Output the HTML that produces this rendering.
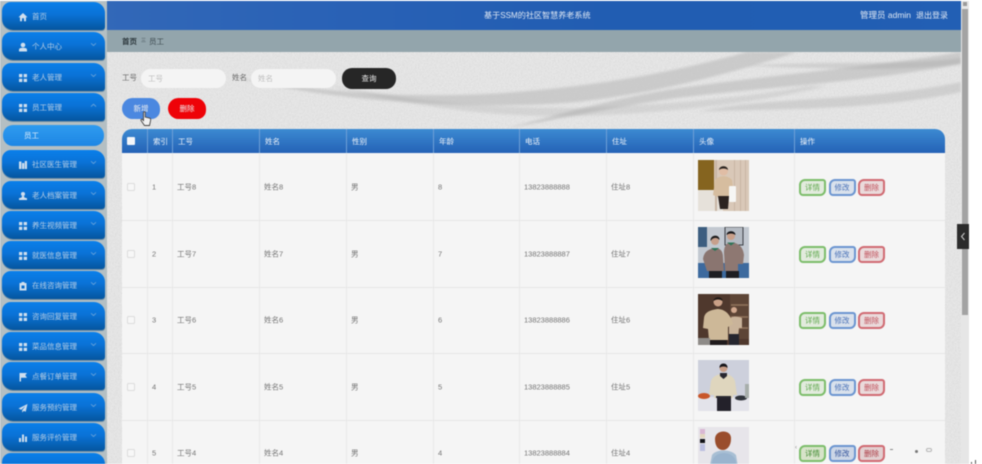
<!DOCTYPE html>
<html lang="zh">
<head>
<meta charset="utf-8">
<title>基于SSM的社区智慧养老系统</title>
<style>
html,body{margin:0;padding:0;width:982px;height:464px;overflow:hidden;background:#fff}
*{box-sizing:border-box}
body{font-family:"Liberation Sans","Noto Sans CJK SC",sans-serif;font-size:7.5px;color:#666}
#root{position:absolute;left:0;top:0;width:982px;height:464px;overflow:hidden;filter:blur(.55px)}
.a{position:absolute}
#side{left:0;top:0;width:107px;height:464px;background:#b4bfc3}
.m{position:absolute;left:2px;width:103px;height:28px;border-radius:9px 11px 3px 11px;background:linear-gradient(#0a7fea 0%,#0a72d6 45%,#05569f 100%);color:#b5cde4;box-shadow:0 1px 0 #6f8ea5}
.m b{position:absolute;left:30px;top:10px;font-weight:400;font-size:7.5px;line-height:10px;white-space:nowrap}
.m svg.i{position:absolute;left:15.500px;top:10px;width:10px;height:10px;fill:#d0dfee}
.m svg.c{position:absolute;left:88px;top:10px;width:7px;height:5px;fill:none;stroke:#6fa6da;stroke-width:1}
#sub{position:absolute;left:3px;top:125px;width:101px;height:21px;border-radius:10px;background:linear-gradient(#2f9bf0,#1d86e4);color:#dcecfa;font-size:7.5px;line-height:22px;padding-left:21px}
#head{left:107px;top:1px;width:854px;height:29px;background:linear-gradient(90deg,#3268b8,#2a62b6 25%,#215db2 60%,#225fb4);color:#dfe8f4}
#bc{left:107px;top:30px;width:854px;height:22px;background:#93a5ac;font-size:7.5px;line-height:23px;color:#3e4c52}
#bg{left:107px;top:52px;width:854px;height:412px;background:#dfdfdf}
.inp{position:absolute;top:69px;height:19px;background:#f4f4f4;border-radius:10px;color:#bdbdbd;font-size:7.5px;line-height:19px;padding-left:7px}
.lb{position:absolute;top:73px;font-size:7.5px;line-height:10px;color:#666}
.btn{position:absolute;text-align:center;font-size:7.5px;color:#eee}
#tb{left:122px;top:129px;width:823px;height:335px;background:#f5f5f5;overflow:hidden;border-radius:10px 10px 0 0}
#th{position:absolute;left:0;top:0;width:823px;height:24px;background:linear-gradient(#3c8ad2,#2462b6)}
.hc{position:absolute;top:0;height:24px;color:#f0f4fa;font-size:7.5px;line-height:25px;border-left:1px solid #6e9fd6;padding-left:5px;white-space:nowrap}
.hl{position:absolute;left:0;width:823px;height:1px;background:#e6e6e6}
.vl{position:absolute;top:24px;width:1px;height:311px;background:#e9e9e9}
.t{position:absolute;line-height:10px;font-size:7.5px;color:#747474;white-space:nowrap;transform:translateY(.7px)}
.ck{position:absolute;left:5px;width:8px;height:8px;border:1px solid #dcdcdc;border-radius:1.500px;background:#f7f7f7}
.pb{position:absolute;width:27px;height:17px;border-radius:6px 3px 6px 4px;border:2px solid;font-size:7.5px;line-height:13px;text-align:center}
.g{left:677px;border-color:#7cbd6a;background:#e2ebdd;color:#5ea84c}
.bl{left:706.500px;border-color:#6b95d0;background:#d9e1ec;color:#4a72b8}
.r{left:736px;border-color:#d06a72;background:#eadadb;color:#c0525c}
.ph{position:absolute;left:576px;width:51px;height:51px;display:block}
</style>
</head>
<body>
<div id="root">

<div class="a" id="bg">
<svg width="854" height="412" style="display:block">
<defs>
<filter id="nz" x="0" y="0" width="100%" height="100%"><feTurbulence type="fractalNoise" baseFrequency=".7" numOctaves="2" seed="4"/><feColorMatrix values="0 0 0 0 .5  0 0 0 0 .5  0 0 0 0 .5  0 0 0 .55 -.17"/></filter>
<filter id="sb"><feGaussianBlur stdDeviation="1.2"/></filter>
</defs>
<rect width="854" height="412" fill="#e8e8e8"/>
<g filter="url(#sb)" fill="#8f8f8f">
<path d="M130 26C220 40 290 46 380 42C480 36 560 22 640 0L690 0C610 26 540 42 470 50C380 58 240 52 130 26Z" opacity=".32"/>
<path d="M400 76C440 66 490 50 560 38C650 24 760 16 854 0L854 12C760 30 650 36 570 46C500 56 450 68 400 76Z" opacity=".32"/>
<path d="M210 30C300 50 380 56 470 56C540 54 640 46 700 34L720 34C640 54 540 62 470 64C380 66 290 52 210 30Z" opacity=".2"/>
<path d="M590 60C660 44 760 50 854 30L854 40C760 60 660 56 590 60Z" opacity=".26"/>
<path d="M640 14C720 8 800 14 854 6L854 12C790 20 710 16 640 14Z" opacity=".26"/>
</g>
<rect width="854" height="412" filter="url(#nz)"/>
</svg>
</div>

<div class="a" id="side">
<div class="m" style="top:2px"><svg class="i" viewBox="0 0 10 10"><path d="M5 1 .5 5.200H2V9.200H4V6.300H6V9.200H8V5.200H9.500Z"/></svg><b>首页</b></div>
<div class="m" style="top:32px"><svg class="i" viewBox="0 0 10 10"><circle cx="5" cy="3" r="2.300"/><path d="M1 9.500V7.600C1 6.300 3 5.800 5 5.800S9 6.300 9 7.600V9.500Z"/></svg><b>个人中心</b><svg class="c" viewBox="0 0 8 6"><path d="M1 1.500 4 4.300 7 1.500"/></svg></div>
<div class="m" style="top:62.500px"><svg class="i" viewBox="0 0 10 10"><path d="M1 1H4.300V4.300H1ZM5.700 1H9V4.300H5.700ZM1 5.700H4.300V9H1ZM5.700 5.700H9V9H5.700Z"/></svg><b>老人管理</b><svg class="c" viewBox="0 0 8 6"><path d="M1 1.500 4 4.300 7 1.500"/></svg></div>
<div class="m" style="top:93px"><svg class="i" viewBox="0 0 10 10"><path d="M1 1H4.300V4.300H1ZM5.700 1H9V4.300H5.700ZM1 5.700H4.300V9H1ZM5.700 5.700H9V9H5.700Z"/></svg><b>员工管理</b><svg class="c" viewBox="0 0 8 6"><path d="M1 4.300 4 1.500 7 4.300"/></svg></div>
<div id="sub">员工</div>
<div class="m" style="top:150px"><svg class="i" viewBox="0 0 10 10"><path d="M1 1.500H3.400V9H1ZM4 3H6.300V9H4ZM6.800 1H9V9H6.800Z"/></svg><b>社区医生管理</b><svg class="c" viewBox="0 0 8 6"><path d="M1 1.500 4 4.300 7 1.500"/></svg></div>
<div class="m" style="top:180.500px"><svg class="i" viewBox="0 0 10 10"><circle cx="5" cy="3" r="2"/><path d="M4 5H6L6.400 6.500 9 7.300V9H1V7.300L3.600 6.500Z"/></svg><b>老人档案管理</b><svg class="c" viewBox="0 0 8 6"><path d="M1 1.500 4 4.300 7 1.500"/></svg></div>
<div class="m" style="top:211px"><svg class="i" viewBox="0 0 10 10"><path d="M1 1H4.300V4.300H1ZM5.700 1H9V4.300H5.700ZM1 5.700H4.300V9H1ZM5.700 5.700H9V9H5.700Z"/></svg><b>养生视频管理</b><svg class="c" viewBox="0 0 8 6"><path d="M1 1.500 4 4.300 7 1.500"/></svg></div>
<div class="m" style="top:241px"><svg class="i" viewBox="0 0 10 10"><path d="M1 1H4.300V4.300H1ZM5.700 1H9V4.300H5.700ZM1 5.700H4.300V9H1ZM5.700 5.700H9V9H5.700Z"/></svg><b>就医信息管理</b><svg class="c" viewBox="0 0 8 6"><path d="M1 1.500 4 4.300 7 1.500"/></svg></div>
<div class="m" style="top:271px"><svg class="i" viewBox="0 0 10 10"><path fill-rule="evenodd" d="M1.500 2H3.500V1H6.500V2H8.500V9.500H1.500ZM3.500 4.500V7.500H6.500V4.500Z"/></svg><b>在线咨询管理</b><svg class="c" viewBox="0 0 8 6"><path d="M1 1.500 4 4.300 7 1.500"/></svg></div>
<div class="m" style="top:301.500px"><svg class="i" viewBox="0 0 10 10"><path d="M1 1H4.300V4.300H1ZM5.700 1H9V4.300H5.700ZM1 5.700H4.300V9H1ZM5.700 5.700H9V9H5.700Z"/></svg><b>咨询回复管理</b><svg class="c" viewBox="0 0 8 6"><path d="M1 1.500 4 4.300 7 1.500"/></svg></div>
<div class="m" style="top:332px"><svg class="i" viewBox="0 0 10 10"><path d="M1 1H4.300V4.300H1ZM5.700 1H9V4.300H5.700ZM1 5.700H4.300V9H1ZM5.700 5.700H9V9H5.700Z"/></svg><b>菜品信息管理</b><svg class="c" viewBox="0 0 8 6"><path d="M1 1.500 4 4.300 7 1.500"/></svg></div>
<div class="m" style="top:362px"><svg class="i" viewBox="0 0 10 10"><path d="M1.500 1H9L7.300 3.300 9 5.700H3V9.500H1.500Z"/></svg><b>点餐订单管理</b><svg class="c" viewBox="0 0 8 6"><path d="M1 1.500 4 4.300 7 1.500"/></svg></div>
<div class="m" style="top:392.500px"><svg class="i" viewBox="0 0 10 10"><path d="M9.500 1 .5 5.500 3.200 6.700 7.500 3 4.200 7.300V9.500L5.800 7.900 7.700 8.800Z"/></svg><b>服务预约管理</b><svg class="c" viewBox="0 0 8 6"><path d="M1 1.500 4 4.300 7 1.500"/></svg></div>
<div class="m" style="top:423px"><svg class="i" viewBox="0 0 10 10"><path d="M1 5H3V9H1ZM4 1.500H6V9H4ZM7 3.500H9V9H7Z"/></svg><b>服务评价管理</b><svg class="c" viewBox="0 0 8 6"><path d="M1 1.500 4 4.300 7 1.500"/></svg></div>
<div class="m" style="top:453px"></div>
</div>

<div class="a" id="head">
<span class="a" style="left:377px;top:9px;font-size:8.100px;line-height:11px;white-space:nowrap">基于SSM的社区智慧养老系统</span>
<span class="a" style="left:753px;top:9px;font-size:8.500px;line-height:11px;white-space:nowrap">管理员 admin</span>
<span class="a" style="left:809px;top:9px;font-size:8px;line-height:11px;white-space:nowrap">退出登录</span>
</div>

<div class="a" id="bc">
<span class="a" style="left:15px;color:#2d383d;font-weight:700">首页</span>
<span class="a" style="left:34px;font-size:5px">三</span>
<span class="a" style="left:42px">员工</span>
</div>

<span class="lb" style="left:122px">工号</span>
<div class="inp" style="left:141px;width:85px">工号</div>
<span class="lb" style="left:232px">姓名</span>
<div class="inp" style="left:251px;width:85px">姓名</div>
<div class="btn" style="left:342px;top:68px;width:54px;height:21px;line-height:21px;border-radius:10px 10px 10px 10px;background:#262626">查询</div>

<div class="btn" style="left:122px;top:98px;width:38px;height:21px;line-height:21px;border-radius:11px 11px 9px 11px;background:#4b88e0">新增</div>
<div class="btn" style="left:168px;top:98px;width:38px;height:21px;line-height:21px;border-radius:11px 11px 9px 11px;background:#ee0208">删除</div>

<div class="a" id="tb">
<div id="th">
<div style="position:absolute;left:5px;top:8px;width:8px;height:8px;background:#f4f6f9;border-radius:1px"></div>
<div class="hc" style="left:25px;width:25px">索引</div>
<div class="hc" style="left:50px;width:87px">工号</div>
<div class="hc" style="left:137px;width:87px">姓名</div>
<div class="hc" style="left:224px;width:87px">性别</div>
<div class="hc" style="left:311px;width:86px">年龄</div>
<div class="hc" style="left:397px;width:87px">电话</div>
<div class="hc" style="left:484px;width:87px">住址</div>
<div class="hc" style="left:571px;width:101px">头像</div>
<div class="hc" style="left:672px;width:151px">操作</div>
</div>
<div class="vl" style="left:25px"></div><div class="vl" style="left:50px"></div><div class="vl" style="left:137px"></div><div class="vl" style="left:224px"></div><div class="vl" style="left:311px"></div><div class="vl" style="left:397px"></div><div class="vl" style="left:484px"></div><div class="vl" style="left:571px"></div><div class="vl" style="left:672px"></div>
<div class="hl" style="top:91px"></div><div class="hl" style="top:157.500px"></div><div class="hl" style="top:224px"></div><div class="hl" style="top:291px"></div>

<div class="ck" style="top:54px"></div><span class="t" style="left:30px;top:53px">1</span><span class="t" style="left:55px;top:53px">工号8</span><span class="t" style="left:142px;top:53px">姓名8</span><span class="t" style="left:229px;top:53px">男</span><span class="t" style="left:316px;top:53px">8</span><span class="t" style="left:402px;top:53px">13823888888</span><span class="t" style="left:489px;top:53px">住址8</span>
<div class="pb g" style="top:50px">详情</div><div class="pb bl" style="top:50px">修改</div><div class="pb r" style="top:50px">删除</div>

<div class="ck" style="top:120.500px"></div><span class="t" style="left:30px;top:119.500px">2</span><span class="t" style="left:55px;top:119.500px">工号7</span><span class="t" style="left:142px;top:119.500px">姓名7</span><span class="t" style="left:229px;top:119.500px">男</span><span class="t" style="left:316px;top:119.500px">7</span><span class="t" style="left:402px;top:119.500px">13823888887</span><span class="t" style="left:489px;top:119.500px">住址7</span>
<div class="pb g" style="top:116.500px">详情</div><div class="pb bl" style="top:116.500px">修改</div><div class="pb r" style="top:116.500px">删除</div>

<div class="ck" style="top:187px"></div><span class="t" style="left:30px;top:186px">3</span><span class="t" style="left:55px;top:186px">工号6</span><span class="t" style="left:142px;top:186px">姓名6</span><span class="t" style="left:229px;top:186px">男</span><span class="t" style="left:316px;top:186px">6</span><span class="t" style="left:402px;top:186px">13823888886</span><span class="t" style="left:489px;top:186px">住址6</span>
<div class="pb g" style="top:183px">详情</div><div class="pb bl" style="top:183px">修改</div><div class="pb r" style="top:183px">删除</div>

<div class="ck" style="top:253.500px"></div><span class="t" style="left:30px;top:252.500px">4</span><span class="t" style="left:55px;top:252.500px">工号5</span><span class="t" style="left:142px;top:252.500px">姓名5</span><span class="t" style="left:229px;top:252.500px">男</span><span class="t" style="left:316px;top:252.500px">5</span><span class="t" style="left:402px;top:252.500px">13823888885</span><span class="t" style="left:489px;top:252.500px">住址5</span>
<div class="pb g" style="top:249.500px">详情</div><div class="pb bl" style="top:249.500px">修改</div><div class="pb r" style="top:249.500px">删除</div>

<div class="ck" style="top:320px"></div><span class="t" style="left:30px;top:319px">5</span><span class="t" style="left:55px;top:319px">工号4</span><span class="t" style="left:142px;top:319px">姓名4</span><span class="t" style="left:229px;top:319px">男</span><span class="t" style="left:316px;top:319px">4</span><span class="t" style="left:402px;top:319px">13823888884</span><span class="t" style="left:489px;top:319px">住址4</span>
<div class="pb g" style="top:316px;background:#d7e3c9;color:#3f8a2f">详情</div><div class="pb bl" style="top:316px;background:#ccd6e6;color:#34549c">修改</div><div class="pb r" style="top:316px;background:#e2cfd0;color:#ac3b45">删除</div>

<svg class="ph" style="top:31px" viewBox="0 0 51 51"><rect width="51" height="51" fill="#d9c8b8"/><rect width="16" height="34" fill="#85641f"/><path d="M0 30H16L25 45V51H0Z" fill="#e6e1da"/><path d="M17 0h2v51h-2ZM36 0h1v51h-1ZM42 0h1v51h-1ZM47 0h1v51h-1Z" fill="#c8b5a4"/><path d="M17 20C21 15 30 15 34 20L36 35H32L31 37H20L15 35Z" fill="#d6bd9f"/><rect x="31" y="26" width="7" height="16" rx="1" fill="#f6f6f4"/><path d="M20 36H31L30 49H22Z" fill="#2c2320"/><circle cx="25.500" cy="11" r="4.500" fill="#e0bda5"/><path d="M21 10C21 5 30 5 30 10C28 8 23 8 21 10Z" fill="#2b241f"/></svg>

<svg class="ph" style="top:98px" viewBox="0 0 51 51"><rect width="51" height="51" fill="#c2c8d0"/><rect width="9" height="20" fill="#3d5e80"/><rect x="27" y="0" width="18" height="18" fill="#b4bac2" stroke="#3b3f45"/><path d="M0 36H51V51H0Z" fill="#3d6a9e"/><path d="M5 32C6 24 11 22 17 21C21 21 25 23 25 30L26 44H9Z" fill="#8a7570"/><path d="M26 26C26 18 29 16 33 15.500C38 15.500 45 18 46 28L45 37H40V44H27Z" fill="#8e7872"/><path d="M11 44H24V51H11ZM28 44H41V51H28Z" fill="#1e1e22"/><circle cx="17" cy="14" r="4" fill="#c7a08c"/><path d="M12.500 14C12 7 22 7 21.500 13C19 10 15 10 12.500 14Z" fill="#1c1b1c"/><circle cx="33" cy="9" r="4" fill="#c9a08a"/><path d="M28.500 8C28.500 3 37.500 3 37.500 8C35 6 31 6 28.500 8Z" fill="#17171a"/><path d="M13 21 17 24 21 21ZM29 15.500 33 18.500 37 15.500Z" fill="#2e7558"/></svg>

<svg class="ph" style="top:164.500px" viewBox="0 0 51 51"><rect width="51" height="51" fill="#4f382d"/><rect x="32" width="19" height="45" fill="#5d4536"/><path d="M33 11H50M33 23H50M33 34H50" stroke="#93755c" stroke-width="1.500"/><path d="M31 26C33 22 38 22 44 24L44 34H41L40 44H31Z" fill="#c9b39a"/><path d="M6 24C7 17 14 16 19 15C25 15 32 18 35 30L30 33V46H11L10 35L5 34Z" fill="#cdb898"/><path d="M11 46H29V51H11Z" fill="#201b1c"/><path d="M31 40H41V51H31Z" fill="#26262f"/><circle cx="20" cy="8" r="4.500" fill="#caa087"/><path d="M15.500 7C15.500 2 25 2 24.500 7C22 5 18 5 15.500 7Z" fill="#211a17"/><circle cx="36" cy="16" r="3" fill="#d2a98f"/><path d="M0 44H12V51H0Z" fill="#8e8b88"/></svg>

<svg class="ph" style="top:231px" viewBox="0 0 51 51"><rect width="51" height="51" fill="#cdd0dc"/><rect y="37" width="51" height="14" fill="#e3e3ea"/><ellipse cx="6" cy="36" rx="6" ry="3" fill="#c8562a"/><ellipse cx="43" cy="38" rx="6" ry="2.500" fill="#30343c"/><path d="M47 24h4v14h-4Z" fill="#a7aeab"/><path d="M13 21C15 16 20 14 25 14C31 14 35 16 37 21L39 35L35 35V38H16V35L11 35Z" fill="#dfd6be"/><path d="M22 13H29V16L25.500 19 22 16ZM18 36H33V38H18Z" fill="#282730"/><path d="M19 38H33V51H19Z" fill="#23212a"/><circle cx="25.500" cy="8" r="4" fill="#c99f88"/><path d="M21.500 8C21 2 30 2 29.500 8C28 6 23 6 21.500 8Z" fill="#17161a"/></svg>

<svg class="ph" style="top:297.500px" viewBox="0 0 51 51"><rect width="51" height="51" fill="#e7e5ea"/><path d="M2 2h5v5h-5Z" fill="#d9b7d3"/><path d="M2 7h5v4h-5Z" fill="#e3d6c0"/><path d="M2 12h5v4h-5Z" fill="#131318"/><path d="M2 17h5v7h-5Z" fill="#bcbfe0"/><path d="M14 28C18 22 33 22 38 28L40 40H42V51H12V38Z" fill="#a8bfd4"/><ellipse cx="26" cy="36" rx="12" ry="10" fill="#9ab4ce"/><path d="M17 12C17 2 34 2 33 12C33 19 29 23 25 23C20 23 17 19 17 12Z" fill="#9a4d2c"/></svg>
</div>

<div class="a" style="left:140px;top:111px"><svg width="12" height="16" viewBox="0 0 12 16"><path d="M3.500 1.500C3.500.5 5.200.5 5.200 1.500V6L9.800 7.200C10.800 7.500 10.800 8.800 10.500 10L9.500 14.500H4.500L1 9.500C.5 8.500 1.800 7.800 2.500 8.500L3.500 9.500Z" fill="#f1f1f1" stroke="#444" stroke-width=".9"/></svg></div>

<div class="a" style="left:795px;top:444px;font-size:6px;color:#8c8c8c;line-height:8px">‹</div>
<div class="a" style="left:890px;top:449px;width:3px;height:1px;background:#888"></div>
<div class="a" style="left:915px;top:450px;width:3px;height:3px;background:#777;border-radius:2px"></div>
<div class="a" style="left:926px;top:448px;width:6px;height:4px;border:1px solid #b5b5b5;border-radius:2px"></div>

<div class="a" style="left:961px;top:0;width:8px;height:464px;background:#e6e6e6"></div>
<div class="a" style="left:962px;top:9px;width:6px;height:306px;background:#a3a3a3"></div>
<div class="a" style="left:963px;top:2px;width:4px;height:4px;background:#9a9a9a"></div>
<div class="a" style="left:957px;top:224px;width:12px;height:25px;background:#2b2b2b"></div>
<svg class="a" style="left:960px;top:232px" width="6" height="9" viewBox="0 0 6 9"><path d="M4.500 1 1.500 4.500 4.500 8" fill="none" stroke="#cfcfcf"/></svg>
<div class="a" style="left:969px;top:0;width:13px;height:464px;background:#fff"></div>
<div class="a" style="left:975px;top:460px;width:1px;height:4px;background:#555"></div>
<div class="a" style="left:971px;top:462px;width:1px;height:2px;background:#555"></div>
<div class="a" style="left:0;top:0;width:969px;height:1px;background:#fff"></div>
</div>
</body>
</html>
